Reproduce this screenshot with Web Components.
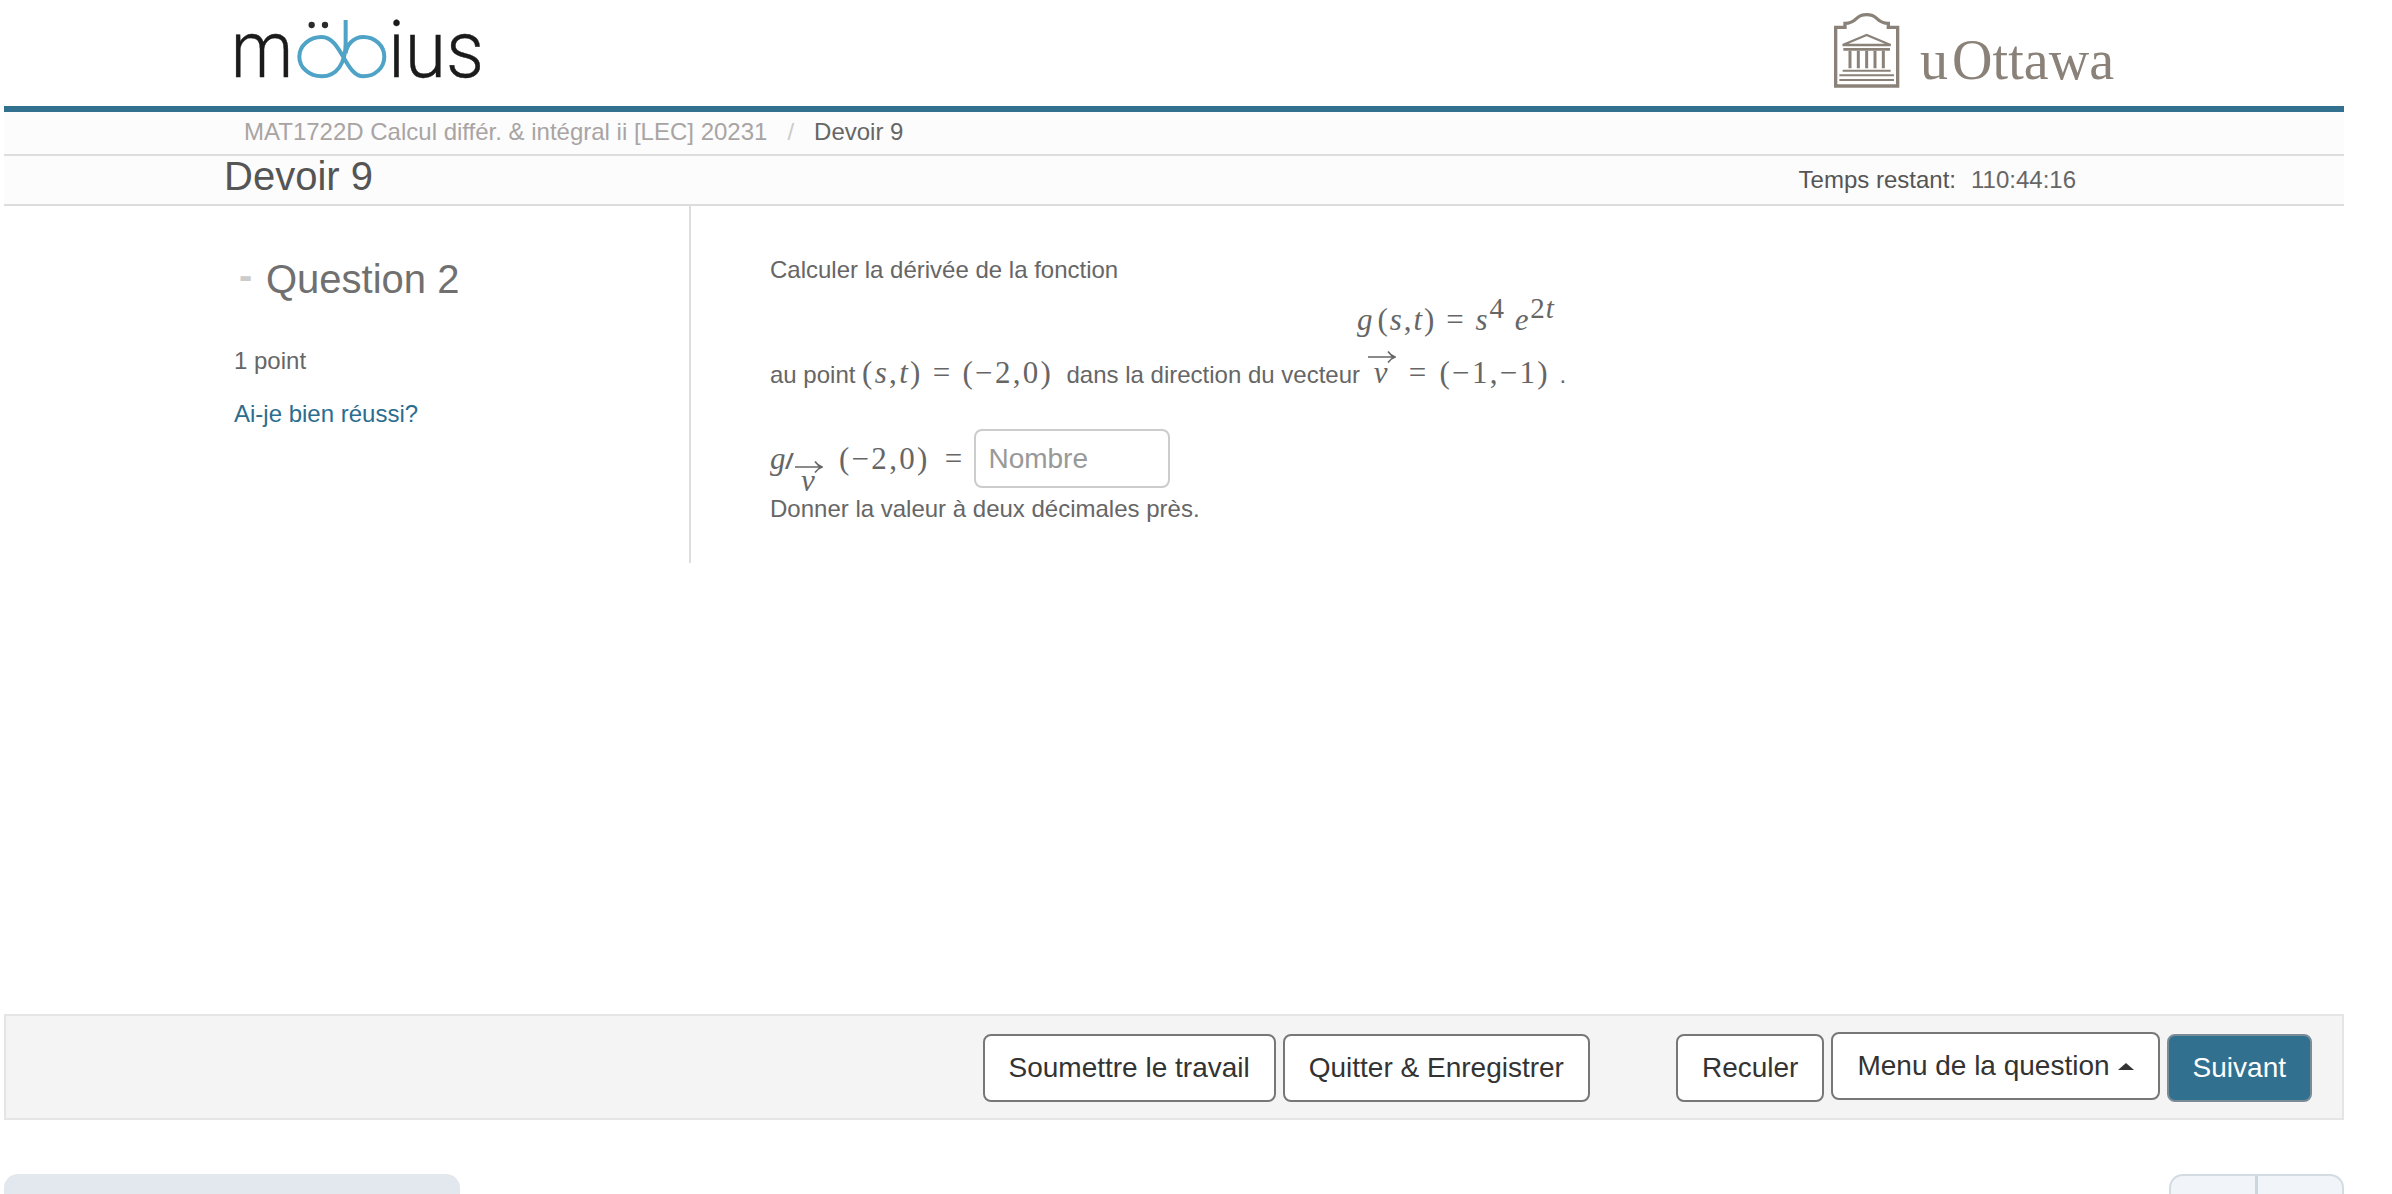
<!DOCTYPE html>
<html lang="fr">
<head>
<meta charset="utf-8">
<title>Devoir 9</title>
<style>
html,body{margin:0;padding:0;background:#fff;overflow:hidden;height:1194px}
body{font-family:"Liberation Sans",Arial,sans-serif;font-size:24px;color:#666}
#page{display:flex;flex-direction:column;width:2340px;margin-left:4px}
</style>
</head>
<body>
<div id="page">
  <mob-header></mob-header>
  <mob-crumbs><span>MAT1722D Calcul différ. &amp; intégral ii [LEC] 20231</span><span slot="current">Devoir 9</span></mob-crumbs>
  <mob-title heading="Devoir 9" timer="110:44:16"></mob-title>
  <mob-question></mob-question>
  <mob-footer>
    <mob-btn slot="left">Soumettre le travail</mob-btn>
    <mob-btn slot="left">Quitter &amp; Enregistrer</mob-btn>
    <mob-btn slot="right">Reculer</mob-btn>
    <mob-btn slot="right" raised caret>Menu de la question</mob-btn>
    <mob-btn slot="right" primary>Suivant</mob-btn>
  </mob-footer>
  <mob-tail></mob-tail>
</div>
<script>
function def(name, css, html, setup){
  customElements.define(name, class extends HTMLElement{
    constructor(){
      super();
      const r=this.attachShadow({mode:'open'});
      r.innerHTML='<style>'+css+'</style>'+html;
      if(setup) setup(this,r);
    }
  });
}
def('mob-header',
`:host{display:flex;justify-content:space-between;height:106px;padding-left:196px;padding-right:204px;box-sizing:border-box}
svg{display:block}`,
`<svg width="320" height="106" viewBox="0 0 320 106" role="img" aria-label="möbius">
  <text x="31" y="77" font-family="Roboto" font-weight="300" font-size="79" fill="#1b1b1b" stroke="#1b1b1b" stroke-width=".4" textLength="62" lengthAdjust="spacingAndGlyphs">m</text>
  <text x="188" y="77" font-family="Roboto" font-weight="300" font-size="79" fill="#1b1b1b" stroke="#1b1b1b" stroke-width=".4" textLength="96" lengthAdjust="spacingAndGlyphs">ius</text>
  <g transform="scale(.3333)">
    <circle cx="335" cy="75" r="9.500" fill="#2b2b2b"/><circle cx="375" cy="75" r="9.500" fill="#2b2b2b"/>
    <path fill="none" stroke="#4ea3c6" stroke-width="12" d="M437 60V130C437 190 410 229 365 229C328 229 298 203 298 170C298 137 328 111 365 111C425 111 435 229 490 229C525 229 553 203 553 170C553 137 525 111 490 111C460 111 440 135 437 160"/>
  </g>
</svg>
<svg width="340" height="106" viewBox="0 0 340 106" role="img" aria-label="uOttawa">
  <g transform="scale(.3333)" fill="none" stroke="#8a8279">
    <path stroke-width="10" d="M107 258V82H135V70C150 70 160 65 170 55C185 40 215 40 230 55C240 65 250 70 265 70V82H293V258Z"/>
    <path stroke-width="7" d="M128 135L200 105L272 135Z"/>
    <path stroke-width="8" d="M130 148H270"/>
    <path stroke-width="9" d="M150 152V205M175 152V205M200 152V205M225 152V205M250 152V205"/>
    <path stroke-width="6" d="M128 212H272M118 226H282M118 240H282"/>
  </g>
  <text x="120" y="79" font-family="Liberation Serif" font-size="56" fill="#8a8279" textLength="194" lengthAdjust="spacing">u<tspan dx="4">Ottawa</tspan></text>
</svg>`);

def('mob-crumbs',
`:host{display:flex;align-items:baseline;height:42px;box-sizing:content-box;padding-left:240px;background:#fcfcfc;border-top:6px solid #31708f;border-bottom:2px solid #ddd;font-size:24px;line-height:40px;color:#a9a4a4}
.sep{color:#ccc;padding:0 20px 0 20px}
.cur{color:#666}`,
`<slot></slot><span class="sep">/</span><span class="cur"><slot name="current"></slot></span>`);

def('mob-title',
`:host{display:flex;justify-content:space-between;align-items:flex-start;height:48px;background:#fcfcfc;border-bottom:2px solid #ddd;padding:0 268px 0 220px;box-sizing:content-box}
h1{margin:0;font-weight:400;font-size:40px;line-height:41px;color:#555}
.t{font-size:24px;line-height:48px;color:#555}.v{color:#666;margin-left:15px}`,
`<h1></h1><div class="t">Temps restant:<span class="v"></span></div>`,
(el,r)=>{r.querySelector('h1').textContent=el.getAttribute('heading');r.querySelector('.v').textContent=el.getAttribute('timer');});

def('m-vec',
`:host{display:inline-block;width:30px;text-align:center;vertical-align:baseline;position:relative}
svg{position:absolute;left:50%;margin-left:-14px;top:0}
:host([under]) svg{top:-4px}`,
`<slot></slot><svg width="28" height="14" viewBox="0 0 28 14"><path d="M0 7H27M20 1.500C22 4.500 24 6 27 7C24 8 22 9.500 20 12.500" fill="none" stroke="#666" stroke-width="1.600"/></svg>`);

def('mob-question',
`:host{display:grid;grid-template-columns:685px 1fr;height:357px;margin-bottom:451px;color:#666}
aside{border-right:2px solid #ddd;padding-left:230px;box-sizing:content-box;width:455px}
h2{margin:0;padding-top:50px;font-weight:400;font-size:40px;line-height:46px;color:#707070;display:flex;align-items:baseline;height:46px}
.dash{color:#ccc;font-weight:700;width:32px;padding-left:5px;box-sizing:border-box;transform:translateY(-4px)}
.pts{margin:42px 0 0;line-height:34px}
a{display:block;margin-top:19px;line-height:34px;color:#2b6d8e;text-decoration:none}
main{padding:47px 0 0 81px;width:1370px}
.ln{line-height:34px;white-space:nowrap}
.disp{display:block;text-align:center;height:40px;line-height:40px;margin-top:13px;padding-left:2px;letter-spacing:2px}
.l2{margin-top:10px;height:46px;line-height:46px}
.l3{display:flex;align-items:baseline;height:59px;margin-top:33px;line-height:59px}
.l4{margin-top:4px}
.m{font-family:"Liberation Serif",serif;font-size:31px;letter-spacing:2.300px;color:#666}
.disp.m{letter-spacing:1.900px}
i{font-style:italic}
.eq{margin:0 10px}
.eq2{margin:0 11px 0 12px}
sup{font-size:29px;line-height:0;vertical-align:12px;letter-spacing:1px}
.in{box-sizing:border-box;width:196px;height:59px;border:2px solid #ccc;border-radius:8px;font:28px "Liberation Sans",sans-serif;padding:0 12px;outline:none;background:#fff;margin-left:10px;color:#666;align-self:flex-start}
.in::placeholder{color:#999;opacity:1}
.pr{font-style:italic;font-family:"Liberation Sans",sans-serif;font-weight:700;font-size:22px;margin-left:-2px}
.sub{display:inline-block;line-height:34px;margin:0 15px 0 2px;position:relative;top:22px;width:30px;text-align:center}
.gp{margin-left:3px}
.dot{margin-left:3px}`,
`<aside>
  <h2><span class="dash">-</span><span>Question 2</span></h2>
  <p class="pts">1 point</p>
  <a href="#">Ai-je bien réussi?</a>
</aside>
<main>
  <div class="ln">Calculer la dérivée de la fonction</div>
  <div class="disp m"><i>g</i><span class="gp">(</span><i>s</i>,<i>t</i>)<span class="eq">=</span><i>s</i><sup>4</sup> <i>e</i><sup>2<i>t</i></sup></div>
  <div class="ln l2">au point <span class="m">(<i>s</i>,<i>t</i>)<span class="eq">=</span>(−2,0)</span>&nbsp; dans la direction du vecteur <span class="m"><m-vec><i>v</i></m-vec><span class="eq2">=</span>(−1,−1)</span><span class="dot"> .</span></div>
  <div class="ln l3"><span class="m"><i>g</i></span><span class="pr">/</span><span class="m sub"><m-vec under><i>v</i></m-vec></span><span class="m">(−2,0)<span class="eq" style="margin-right:0;margin-left:15px">=</span></span><input class="in" placeholder="Nombre" aria-label="Nombre"></div>
  <div class="ln l4">Donner la valeur à deux décimales près.</div>
</main>`);

def('mob-btn',
`:host{display:inline-flex;align-items:center;box-sizing:border-box;height:68px;padding:0 24px;border:2px solid #777;border-radius:8px;background:#fff;color:#333;font-size:28px;white-space:nowrap}
:host([primary]){background:#31708f;color:#fff;border-color:#7a8c96}
:host([raised]){position:relative;top:-2px}
.c{display:none;width:0;height:0;border:8px solid transparent;border-top:0;border-bottom:7px solid #333;margin-left:8px}
:host([caret]) .c{display:inline-block}`,
`<slot></slot><span class="c"></span>`);

def('mob-footer',
`:host{display:flex;justify-content:flex-end;box-sizing:border-box;height:106px;padding:18px 30px 0 0;background:#f4f4f4;border:2px solid #e5e5e5}
.g{display:flex;gap:7px;height:68px}
.a{margin-right:86px}`,
`<div class="g a"><slot name="left"></slot></div><div class="g"><slot name="right"></slot></div>`);

def('mob-tail',
`:host{display:flex;justify-content:space-between;margin-top:54px}
.b{width:456px;height:60px;background:#e3e8ef;border-radius:14px 14px 0 0}
.p{display:flex;width:175px;height:60px;box-sizing:border-box;background:#f1f5f9;border:2px solid #d3dce3;border-bottom:0;border-radius:14px 14px 0 0}
.p span{flex:1}.p span:first-child{border-right:3px solid #cdd6dd}`,
`<div class="b"></div><div class="p"><span></span><span></span></div>`);
</script>
</body>
</html>
